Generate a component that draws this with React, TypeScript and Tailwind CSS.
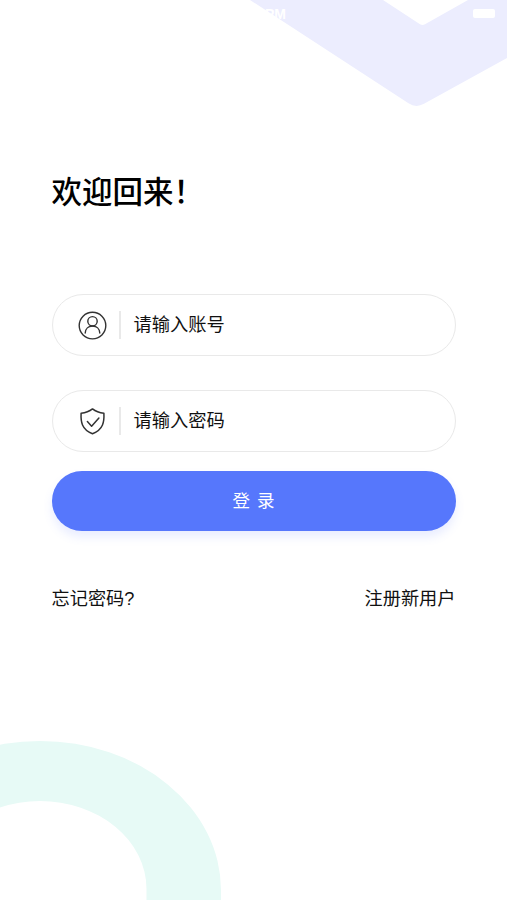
import type { ReactNode } from 'react';

function StatusBar() {
  return (
    <div className="relative flex h-[26px] items-center justify-end pr-3 text-white">
      <span className="absolute left-[219px] top-[5px] w-[67px] text-right font-['Liberation_Sans',sans-serif] text-sm font-bold leading-[18px]">
        PM
      </span>
      <span className="h-[9px] w-[22px] rounded-[2px] bg-white" />
    </div>
  );
}

function Background() {
  return (
    <svg className="absolute inset-0" width="507" height="900" viewBox="0 0 507 900" fill="none" aria-hidden="true">
      <path
        d="M250 0L408.500 103.300Q416 108.200 424 103.800L507 58V0H468L425 24.200Q422.500 25.600 420 24.200L383 0Z"
        fill="#ecedfe"
      />
      <path
        d="M-141 890a181 149 0 0 1 362 0v10h-74.500v-11a106.500 88 0 0 0-213 0v11H-141Z"
        fill="#e7faf6"
      />
    </svg>
  );
}

function UserIcon() {
  return (
    <svg width="30" height="30" viewBox="0 0 30 30" fill="none" stroke="#333" strokeWidth="1.4" strokeLinecap="round">
      <circle cx="15.500" cy="15.600" r="13.300" />
      <circle cx="15.500" cy="11.300" r="4.700" />
      <path d="M8.200 23C8.400 18.800 11.400 16 15.500 16s7.100 2.800 7.300 7" />
    </svg>
  );
}

function ShieldIcon() {
  return (
    <svg
      width="30"
      height="30"
      viewBox="0 0 30 30"
      fill="none"
      stroke="#333"
      strokeWidth="1.5"
      strokeLinecap="round"
      strokeLinejoin="round"
    >
      <path d="M15.500 2.900C12.500 5.300 8.700 6.800 4.100 7.300C3.700 15.500 4.500 23.500 15.500 27.800C26.500 23.500 27.300 15.500 26.900 7.300C22.300 6.800 18.500 5.300 15.500 2.900Z" />
      <path d="M10.400 15.600l4.200 4.600 7.300-8.200" />
    </svg>
  );
}

function Field({ icon, label }: { icon: ReactNode; label: string }) {
  return (
    <label className="flex h-[62px] items-center rounded-full border border-[#e9e9e9] bg-white pl-6">
      {icon}
      <span className="ml-3 h-7 w-[2px] bg-[#e9e9e9]" />
      <span className="ml-[13px] pb-[5px] text-[18.300px] leading-6 text-[#111]">{label}</span>
    </label>
  );
}

export default function App() {
  return (
    <div className="relative h-[900px] w-[507px] overflow-hidden bg-white font-['Noto_Sans_CJK_SC',sans-serif] text-black">
      <Background />
      <div className="relative">
        <StatusBar />
        <main className="px-[51.500px] pt-[140px]">
          <h1 className="h-12 text-[30.500px] font-medium leading-[48px]">欢迎回来！</h1>
          <form className="mt-20 flex flex-col">
            <Field icon={<UserIcon />} label="请输入账号" />
            <div className="mt-[34px]">
              <Field icon={<ShieldIcon />} label="请输入密码" />
            </div>
            <button
              type="button"
              className="mt-[19px] h-[60px] rounded-full bg-[#5677fc] pb-[2px] text-[17.500px] text-white shadow-[0_6px_10px_rgba(86,119,252,0.13)] [word-spacing:3px]"
            >
              登 录
            </button>
          </form>
          <div className="mt-[54px] flex justify-between text-[18.200px] leading-6 text-[#111]">
            <a>
              忘记密码<span className="font-['Liberation_Sans',sans-serif]">?</span>
            </a>
            <a>注册新用户</a>
          </div>
        </main>
      </div>
    </div>
  );
}
